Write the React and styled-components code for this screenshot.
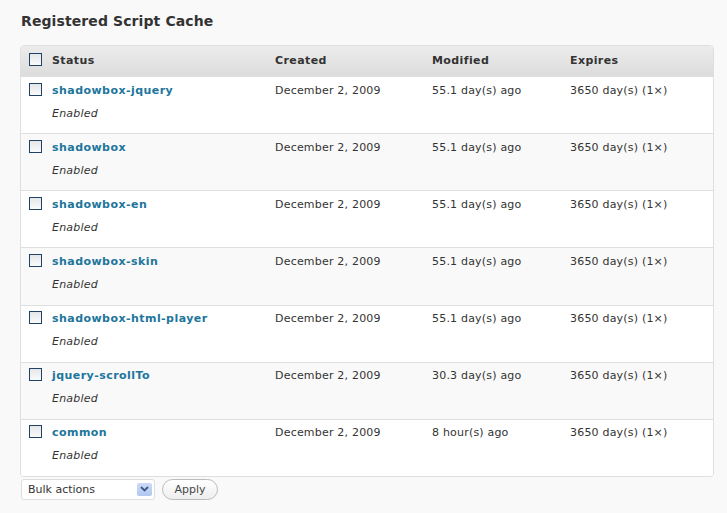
import React from 'react'
import styled, { createGlobalStyle } from 'styled-components'

const GlobalStyle = createGlobalStyle`
  html, body {
    margin: 0;
    padding: 0;
    background: #f9f9f9;
  }
  body {
    font-family: 'DejaVu Sans', Verdana, sans-serif;
    font-size: 11px;
    color: #333;
  }
`

const rows = [
  { name: 'shadowbox-jquery', modified: '55.1 day(s) ago' },
  { name: 'shadowbox', modified: '55.1 day(s) ago' },
  { name: 'shadowbox-en', modified: '55.1 day(s) ago' },
  { name: 'shadowbox-skin', modified: '55.1 day(s) ago' },
  { name: 'shadowbox-html-player', modified: '55.1 day(s) ago' },
  { name: 'jquery-scrollTo', modified: '30.3 day(s) ago' },
  { name: 'common', modified: '8 hour(s) ago' }
]

const App = () => {
  return (
    <Page>
      <GlobalStyle />
      <Title>Registered Script Cache</Title>
      <Table>
        <HeadRow>
          <CheckCell>
            <Check />
          </CheckCell>
          <HeadCell>Status</HeadCell>
          <HeadCell>Created</HeadCell>
          <HeadCell>Modified</HeadCell>
          <HeadCell>Expires</HeadCell>
        </HeadRow>
        {rows.map((row, i) => (
          <BodyRow key={row.name} alt={i % 2 === 1}>
            <CheckCell>
              <Check />
            </CheckCell>
            <Cell>
              <Name href='#'>{row.name}</Name>
              <State>Enabled</State>
            </Cell>
            <Cell>December 2, 2009</Cell>
            <Cell>{row.modified}</Cell>
            <Cell>3650 day(s) (1×)</Cell>
          </BodyRow>
        ))}
      </Table>
      <Actions>
        <Select>
          <span>Bulk actions</span>
          <Arrow>
            <svg width='9' height='6' viewBox='0 0 9 6'>
              <path d='M1 1 L4.5 4.5 L8 1' fill='none' stroke='#3d5a8a' strokeWidth='1.8' />
            </svg>
          </Arrow>
        </Select>
        <Button>Apply</Button>
      </Actions>
    </Page>
  )
}

const Page = styled.div`
  padding: 11px 15px 0 20px;
`

const Title = styled.h2`
  margin: 0 0 14px 1px;
  font-size: 14px;
  font-weight: bold;
  color: #333;
  line-height: 20px;
  letter-spacing: 0.1px;
`

const Table = styled.div`
  width: 692px;
  border: 1px solid #dfdfdf;
  border-radius: 4px;
  overflow: hidden;
  background: #fff;
`

const columns = '31px 223px 157px 138px 1fr'

const HeadRow = styled.div`
  display: grid;
  grid-template-columns: ${columns};
  height: 30px;
  box-sizing: border-box;
  padding-bottom: 2px;
  align-items: center;
  background: linear-gradient(#ececec, #dcdcdc);
`

const HeadCell = styled.div`
  font-weight: bold;
  color: #333;
  letter-spacing: 0.4px;
`

const BodyRow = styled.div`
  display: grid;
  grid-template-columns: ${columns};
  align-items: start;
  height: 57.15px;
  box-sizing: border-box;
  border-top: 1px solid #dfdfdf;
  padding-top: 5.5px;
  background: ${props => (props.alt ? '#f9f9f9' : '#fff')};
`

const CheckCell = styled.div`
  padding-left: 8px;
  display: flex;
  align-items: center;
  height: 15px;
`

const Check = styled.span`
  display: block;
  width: 11px;
  height: 11px;
  margin-top: -2px;
  border: 1px solid #1f4268;
  background: linear-gradient(#e6e6e6, #fafafa);
`

const Cell = styled.div`
  line-height: 15px;
  color: #333;
  letter-spacing: 0.2px;
`

const Name = styled.a`
  display: block;
  font-weight: bold;
  color: #21759b;
  text-decoration: none;
  letter-spacing: 0.45px;
`

const State = styled.div`
  margin-top: 8px;
  font-style: italic;
  color: #333;
`

const Actions = styled.div`
  display: flex;
  align-items: center;
  gap: 7px;
  margin-top: 2px;
  padding-left: 1px;
`

const Select = styled.div`
  height: 19px;
  border: 1px solid #ddd;
  border-radius: 3px;
  background: #fff;
  display: flex;
  align-items: center;
  justify-content: space-between;
  padding: 0 2px 0 6px;
  box-sizing: content-box;
  width: 124px;
  color: #333;
`

const Arrow = styled.span`
  width: 15px;
  height: 13px;
  background: linear-gradient(#cbdaf7, #b3c8f0);
  border-radius: 2px;
  display: flex;
  align-items: center;
  justify-content: center;
`

const Button = styled.button`
  height: 21px;
  width: 56px;
  border: 1px solid #bbb;
  border-radius: 11px;
  background: linear-gradient(#fff, #eee);
  color: #464646;
  font-family: 'DejaVu Sans', Verdana, sans-serif;
  font-size: 11px;
  padding: 0;
`

export default App
